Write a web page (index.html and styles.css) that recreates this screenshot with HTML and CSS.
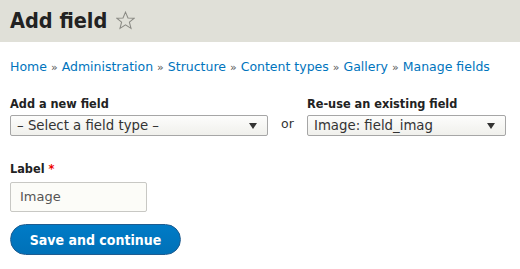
FILE: index.html
```html
<!DOCTYPE html>
<html>
<head>
<meta charset="utf-8">
<link rel="stylesheet" href="styles.css">
</head>
<body>
<header class="page-header">
  <h1 class="title">Add field <svg class="star" width="19" height="19" viewBox="0 0 20 20"><polygon points="10,1.2 12.6,7.3 19.2,7.6 14.1,11.8 15.8,18.3 10,14.6 4.2,18.3 5.9,11.8 0.8,7.6 7.4,7.3" fill="none" stroke="#8a8a84" stroke-width="1.1" stroke-linejoin="miter"/></svg></h1>
</header>
<main class="content">
  <nav class="breadcrumb">
    <a href="#">Home</a> <span class="sep">»</span> <a href="#">Administration</a> <span class="sep">»</span> <a href="#">Structure</a> <span class="sep">»</span> <a href="#">Content types</a> <span class="sep">»</span> <a href="#">Gallery</a> <span class="sep">»</span> <a href="#">Manage fields</a>
  </nav>
  <div class="field-row">
    <div class="field new-field">
      <label class="label">Add a new field</label>
      <div class="select wide"><span>– Select a field type –</span><span class="arrow"></span></div>
    </div>
    <div class="or">or</div>
    <div class="field">
      <label class="label">Re-use an existing field</label>
      <div class="select narrow"><span>Image: field_imag</span><span class="arrow"></span></div>
    </div>
  </div>
  <div class="field label-field">
    <label class="label">Label <span class="req">*</span></label>
    <div class="text-input">Image</div>
  </div>
  <button class="button">Save and continue</button>
</main>
</body>
</html>
```
FILE: styles.css
```css
html, body { margin: 0; padding: 0; background: #fff; }
body { font-family: "DejaVu Sans", Verdana, sans-serif; color: #222; width: 520px; height: 269px; overflow: hidden; }
.page-header { background: #e0e0d8; height: 42px; padding: 0 10px; box-sizing: border-box; }
.title { margin: 0; font-family: "DejaVu Sans Condensed", "DejaVu Sans", sans-serif; font-size: 21.5px; font-weight: bold; line-height: 42px; color: #222; display: flex; align-items: center; }
.star { margin-left: 9px; margin-top: -1px; }
.content { padding: 17px 10px 0; }
.breadcrumb { font-size: 12.5px; line-height: 16px; color: #0074bd; white-space: nowrap; }
.breadcrumb a { color: #0074bd; text-decoration: none; }
.sep { color: #555; font-size: 11px; }
.field-row { display: flex; align-items: flex-end; margin-top: 20px; }
.field { display: flex; flex-direction: column; }
.label { font-family: "DejaVu Sans Condensed", "DejaVu Sans", sans-serif; font-size: 12.6px; font-weight: bold; line-height: 16px; margin-bottom: 3px; color: #222; }
.select { box-sizing: border-box; height: 21px; border: 1px solid #a6a6a6; border-radius: 2px; background: linear-gradient(#fdfdfc, #f0f0ec); display: flex; align-items: center; justify-content: space-between; padding: 0 10px 0 6px; font-size: 13.3px; color: #333; }
.wide { width: 258px; }
.narrow { width: 199px; }
.arrow { width: 0; height: 0; border-left: 4.5px solid transparent; border-right: 4.5px solid transparent; border-top: 6px solid #333; }
.or { font-size: 12.5px; width: 39px; text-align: center; height: 21px; line-height: 18px; color: #333; }
.label-field { margin-top: 25px; }
.req { color: #e00; }
.text-input { box-sizing: border-box; width: 137px; height: 30px; border: 1px solid #c8c8c4; border-radius: 2px; background: #fcfcf8; font-size: 13px; color: #555; padding: 0 9px; line-height: 28px; margin-top: 2px; }
.button { display: block; margin-top: 12px; width: 171px; height: 31px; border: 1px solid #1e5c90; border-radius: 16px; background: linear-gradient(#007bc6, #0071b8); color: #fff; font-family: "DejaVu Sans Condensed", "DejaVu Sans", sans-serif; font-weight: bold; font-size: 14px; padding: 0; }
```
